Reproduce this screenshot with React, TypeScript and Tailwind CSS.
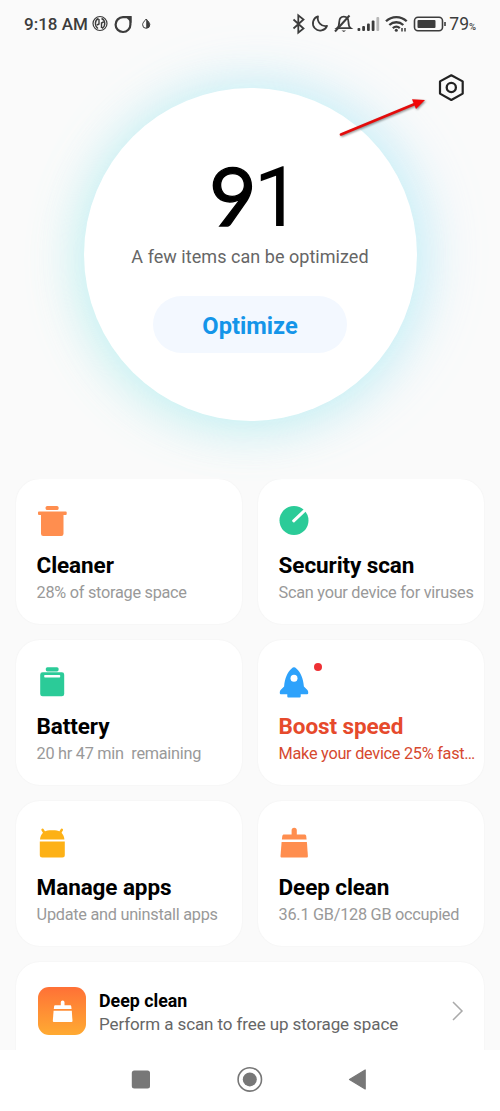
import type { ReactNode } from "react";

const TrashIcon = () => (
  <svg width="32" height="32" viewBox="0 0 32 32" fill="#ff8e4f">
    <rect x="9.6" y="1" width="13" height="4" rx="1.6" />
    <path d="M2.9 6.6H29.800a.9.9 0 0 1 .9.9V9a1 1 0 0 1-1 1h-2.200v18.8a2.200 2.200 0 0 1-2.200 2.200H7.200A2.200 2.200 0 0 1 5 28.800V10H3a1 1 0 0 1-1-1V7.500a.9.9 0 0 1 .9-.9Z" />
  </svg>
);

const ScanIcon = () => (
  <svg width="32" height="32" viewBox="0 0 32 32">
    <circle cx="16" cy="15.500" r="14.500" fill="#2bcb98" />
    <path d="M15.700 15.800 27.600 4.600" stroke="#fff" strokeWidth="3" strokeLinecap="round" />
  </svg>
);

const BatteryIcon = () => (
  <svg width="32" height="32" viewBox="0 0 32 32" fill="#2bcb98">
    <rect x="9.800" y="1.200" width="12.800" height="4.200" rx="1.600" />
    <rect x="4.200" y="6.300" width="24" height="24" rx="2.400" />
    <rect x="8.200" y="9" width="16" height="2.500" rx=".7" fill="#fff" />
  </svg>
);

const RocketIcon = () => (
  <svg width="32" height="32" viewBox="0 0 32 32" fill="#2ea2fb">
    <path d="M16 1.200c.8 0 1.600.5 2.300 1.200 4.500 4.100 6.900 9.600 7.600 18.100l3.500 3.600c.5.600.800 1.300.800 2v1.200c0 .5-.4.900-.9.900h-6.600v2.400c0 .5-.4.900-.9.900H10.200c-.5 0-.9-.4-.9-.9v-2.400H2.700c-.5 0-.9-.4-.9-.9v-1.200c0-.7.3-1.400.8-2l3.500-3.600c.7-8.500 3.100-14 7.600-18.100.7-.7 1.500-1.200 2.300-1.200Z" />
    <circle cx="16" cy="12.300" r="3.500" fill="#fff" />
  </svg>
);

const AndroidIcon = () => (
  <svg width="32" height="32" viewBox="0 0 32 32" fill="#fdb116">
    <path d="m6.600 2.800 2.600 4.300M25.800 2.800l-2.600 4.300" stroke="#fdb116" strokeWidth="2.500" strokeLinecap="round" />
    <path d="M4 12.600C4.400 7 8.200 3.300 13.500 3.300h5.400c5.300 0 9.100 3.700 9.500 9.300Z" />
    <path d="M3.800 14.600h25v13.300a2.500 2.500 0 0 1-2.500 2.500h-20a2.500 2.500 0 0 1-2.500-2.500Z" />
  </svg>
);

const BroomIcon = ({ size = 32, color = "#ff8e4f" }: { size?: number; color?: string }) => (
  <svg width={size} height={size} viewBox="0 0 32 32" fill={color}>
    <path d="M13.600 7.400V3.300a2.600 2.600 0 0 1 5.200 0v4.100h7.600c1 0 1.700.6 1.800 1.500l.4 3.700H3.900l.4-3.700c.1-.9.800-1.500 1.800-1.500Z" />
    <path d="M3.600 14.900h25.300l1 14.300c0 .8-.5 1.300-1.300 1.300H3.800c-.8 0-1.300-.5-1.300-1.300Z" />
  </svg>
);

type CardProps = { icon: ReactNode; title: string; detail: string; alert?: boolean };

const Card = ({ icon, title, detail, alert }: CardProps) => (
  <div className="h-[145px] rounded-[24px] bg-white pt-[26px] pl-[20.600px] shadow-[0_0_2px_rgba(0,0,0,0.05)]">
    <div className="-ml-[0.600px] flex h-8 items-start">
      {icon}
      {alert && <span className="mt-[-3px] ml-[4px] size-2 rounded-full bg-[#ee3034]" />}
    </div>
    <h2 className={"mt-[14px] h-[29px] text-[22.500px] leading-[28px] font-bold tracking-[-0.1px] " + (alert ? "text-[#e64a2c]" : "text-black")}>
      {title}
    </h2>
    <p className={"h-[24px] text-[16.300px] leading-[26px] tracking-[-0.27px] whitespace-pre " + (alert ? "text-[#d6492f]" : "text-[#999]")}>
      {detail}
    </p>
  </div>
);

const cards: CardProps[] = [
  { icon: <TrashIcon />, title: "Cleaner", detail: "28% of storage space" },
  { icon: <ScanIcon />, title: "Security scan", detail: "Scan your device for viruses" },
  { icon: <BatteryIcon />, title: "Battery", detail: "20 hr 47 min  remaining" },
  { icon: <RocketIcon />, title: "Boost speed", detail: "Make your device 25% fast…", alert: true },
  { icon: <AndroidIcon />, title: "Manage apps", detail: "Update and uninstall apps" },
  { icon: <BroomIcon />, title: "Deep clean", detail: "36.1 GB/128 GB occupied" },
];

const StatusBar = () => (
  <header className="flex h-12 items-center pr-[24px] pl-[24px] text-[#3c3c3c]">
    <span className="w-[67px] pt-px text-[17px] font-medium whitespace-nowrap">9:18 AM</span>
    <svg width="62" height="20" viewBox="0 0 62 20" fill="none" stroke="#3c3c3c">
      <circle cx="9" cy="9.500" r="7" strokeWidth="1.200" />
      <path d="M7.500 4.500C3.500 6 3.500 12 7 14.500M10.500 4.500c4 1.500 4.500 7.500.5 10M8 5v5l-2 1M10.500 14V9l2-1" strokeWidth="1.400" />
      <path d="M32 3.200h7.400v7.300a7.400 7.400 0 1 1-7.400-7.300Z" strokeWidth="2.200" />
      <path d="M34 2.200h6.500V9Z" fill="#3c3c3c" stroke="none" />
      <path d="M55.200 5c2.200 2.600 3.600 4 3.600 5.700a3.600 3.600 0 0 1-7.200 0C51.600 9 53 7.600 55.200 5Z" strokeWidth="1" />
      <path d="M55.200 5c2.200 2.600 3.600 4 3.600 5.700a3.600 3.600 0 0 1-3.600 3.500Z" fill="#3c3c3c" stroke="none" />
    </svg>
    <svg className="ml-auto" width="155" height="24" viewBox="0 0 155 24" fill="none" stroke="#3c3c3c" strokeWidth="1.800">
      <path d="m1.500 7.500 10 9-5.200 4.200V3.300l5.200 4.200-10 9" />
      <path d="M26 4.300a7.300 7.300 0 1 0 9 9.600A7.800 7.800 0 0 1 26 4.300Z" strokeLinejoin="round" />
      <path d="M45 16.200c1.700-1.300 2.200-3 2.200-6 0-3.500 2-5.600 4.600-5.600 2.800 0 4.700 2.100 4.700 5.600 0 3 .5 4.700 2.200 6Z" />
      <path d="m43 19.500 14.500-16" strokeWidth="2" />
      <path d="M49.500 18.500h4.600L51.800 20Z" fill="#3c3c3c" stroke="none" />
      <g fill="#3c3c3c" stroke="none">
        <rect x="65.500" y="16" width="2.800" height="3" rx="1" />
        <rect x="70.200" y="14" width="2.800" height="5" rx="1" />
        <rect x="75" y="11.500" width="2.800" height="7.500" rx="1" />
        <rect x="79.700" y="8.500" width="2.800" height="10.500" rx="1" />
        <rect x="84.400" y="5" width="2.800" height="14" rx="1" fill="#b7b7b7" />
      </g>
      <g strokeWidth="2.300">
        <path d="M94 9.300c5.700-5.600 15-5.600 20.700 0M97.300 13c4-3.700 10-3.700 14 0" />
        <path d="M100.800 16.200c2.200-1.900 4.900-1.900 7 0" />
      </g>
      <circle cx="104.300" cy="18.300" r="1.500" fill="#3c3c3c" stroke="none" />
      <path d="M110 16v3.500M113 16v3.500" strokeWidth="1.500" />
      <rect x="122.500" y="5.200" width="28" height="13.500" rx="3.500" strokeWidth="1.600" />
      <rect x="125.500" y="8" width="18" height="8" rx="1" fill="#3c3c3c" stroke="none" />
      <path d="M153 10v4" strokeWidth="1.600" />
    </svg>
    <span className="ml-[2px] flex items-baseline pt-px text-[17.500px]">
      79<span className="text-[9.500px] font-medium">%</span>
    </span>
  </header>
);

export default function App() {
  return (
    <div className="flex h-[1111px] w-[500px] flex-col overflow-hidden bg-[#fafafa] font-['Roboto',sans-serif]">
      <StatusBar />
      <section className="relative flex h-[431px] shrink-0 flex-col items-center pt-10">
        <div className="flex size-[333px] flex-col items-center rounded-full bg-white pt-[64px] shadow-[-9px_7px_50px_rgba(140,240,225,0.320),9px_-2px_58px_rgba(140,220,255,0.400)]">
          <div className="flex h-[84px] items-baseline pl-[10px] leading-[84px] text-black">
            <span className="font-['Lato'] text-[82px] tracking-[-3px] [-webkit-text-stroke:1.300px_black]">9</span>
            <span className="text-[84px]">1</span>
          </div>
          <p className="mt-[9px] h-6 text-[18px] leading-6 tracking-[0.040px] whitespace-nowrap text-[#666]">A few items can be optimized</p>
          <button className="mt-[27px] h-[57px] w-[194px] rounded-full bg-[#f3f8ff] pt-[4px] text-[23.700px] font-bold text-[#1495e9]">Optimize</button>
        </div>
        <button aria-label="Settings" className="absolute top-[25px] right-[34px]">
          <svg width="30" height="30" viewBox="0 0 30 30" fill="none" stroke="#222" strokeWidth="2.200" strokeLinejoin="round">
            <path d="M15.300 2.300 26.700 8.400v12.200l-11.400 6.400L4 20.600V8.400Z" />
            <circle cx="15.300" cy="14.500" r="4.600" strokeWidth="2.300" />
          </svg>
        </button>
        <svg className="absolute top-[46px] left-[334px] drop-shadow-[1px_1px_1px_rgba(0,0,0,0.450)]" width="96" height="46" viewBox="0 0 96 46">
          <path d="M7 40.500 82 9.500" stroke="#e30b0b" strokeWidth="2.600" strokeLinecap="round" />
          <path d="m78 5.200 13 .8-9 9Z" fill="#f20606" />
        </svg>
      </section>
      <main className="flex min-h-0 flex-1 flex-col gap-4 overflow-hidden px-4">
        <div className="grid shrink-0 grid-cols-2 gap-4">
          {cards.map((card) => (
            <Card key={card.title} {...card} />
          ))}
        </div>
        <div className="flex h-[110px] shrink-0 items-start rounded-[24px] bg-white pt-[25px] pr-5 pl-[22px] shadow-[0_0_2px_rgba(0,0,0,0.05)]">
          <div className="flex size-12 items-center justify-center rounded-[11px] bg-linear-to-b from-[#ff7036] to-[#ffaa32]">
            <BroomIcon size={23} color="#fff" />
          </div>
          <div className="ml-[13px] pt-[2px]">
            <h3 className="text-[17.800px] leading-[23px] font-bold text-black">Deep clean</h3>
            <p className="text-[17px] leading-[24px] tracking-[-0.1px] whitespace-nowrap text-[#666]">Perform a scan to free up storage space</p>
          </div>
          <svg className="mt-[13px] ml-auto" width="12" height="22" viewBox="0 0 12 22" fill="none" stroke="#aaa" strokeWidth="1.500">
            <path d="m1 2 9 9-9 9" />
          </svg>
        </div>
      </main>
      <nav className="flex h-[61px] shrink-0 items-start justify-between bg-white pt-4 pr-[132px] pl-[131px]">
        <svg width="20" height="26" viewBox="0 0 20 26"><rect x=".8" y="4.400" width="18.200" height="18.200" rx="2.500" fill="#777" /></svg>
        <svg width="26" height="26" viewBox="0 0 26 26" fill="none"><circle cx="12.800" cy="13.400" r="11.700" stroke="#777" strokeWidth="1.600" /><circle cx="12.800" cy="13.400" r="7" fill="#777" /></svg>
        <svg width="20" height="26" viewBox="0 0 20 26"><path d="M17.200 4v19L1.500 13.500Z" fill="#777" stroke="#777" strokeWidth="1.200" strokeLinejoin="round" /></svg>
      </nav>
    </div>
  );
}
